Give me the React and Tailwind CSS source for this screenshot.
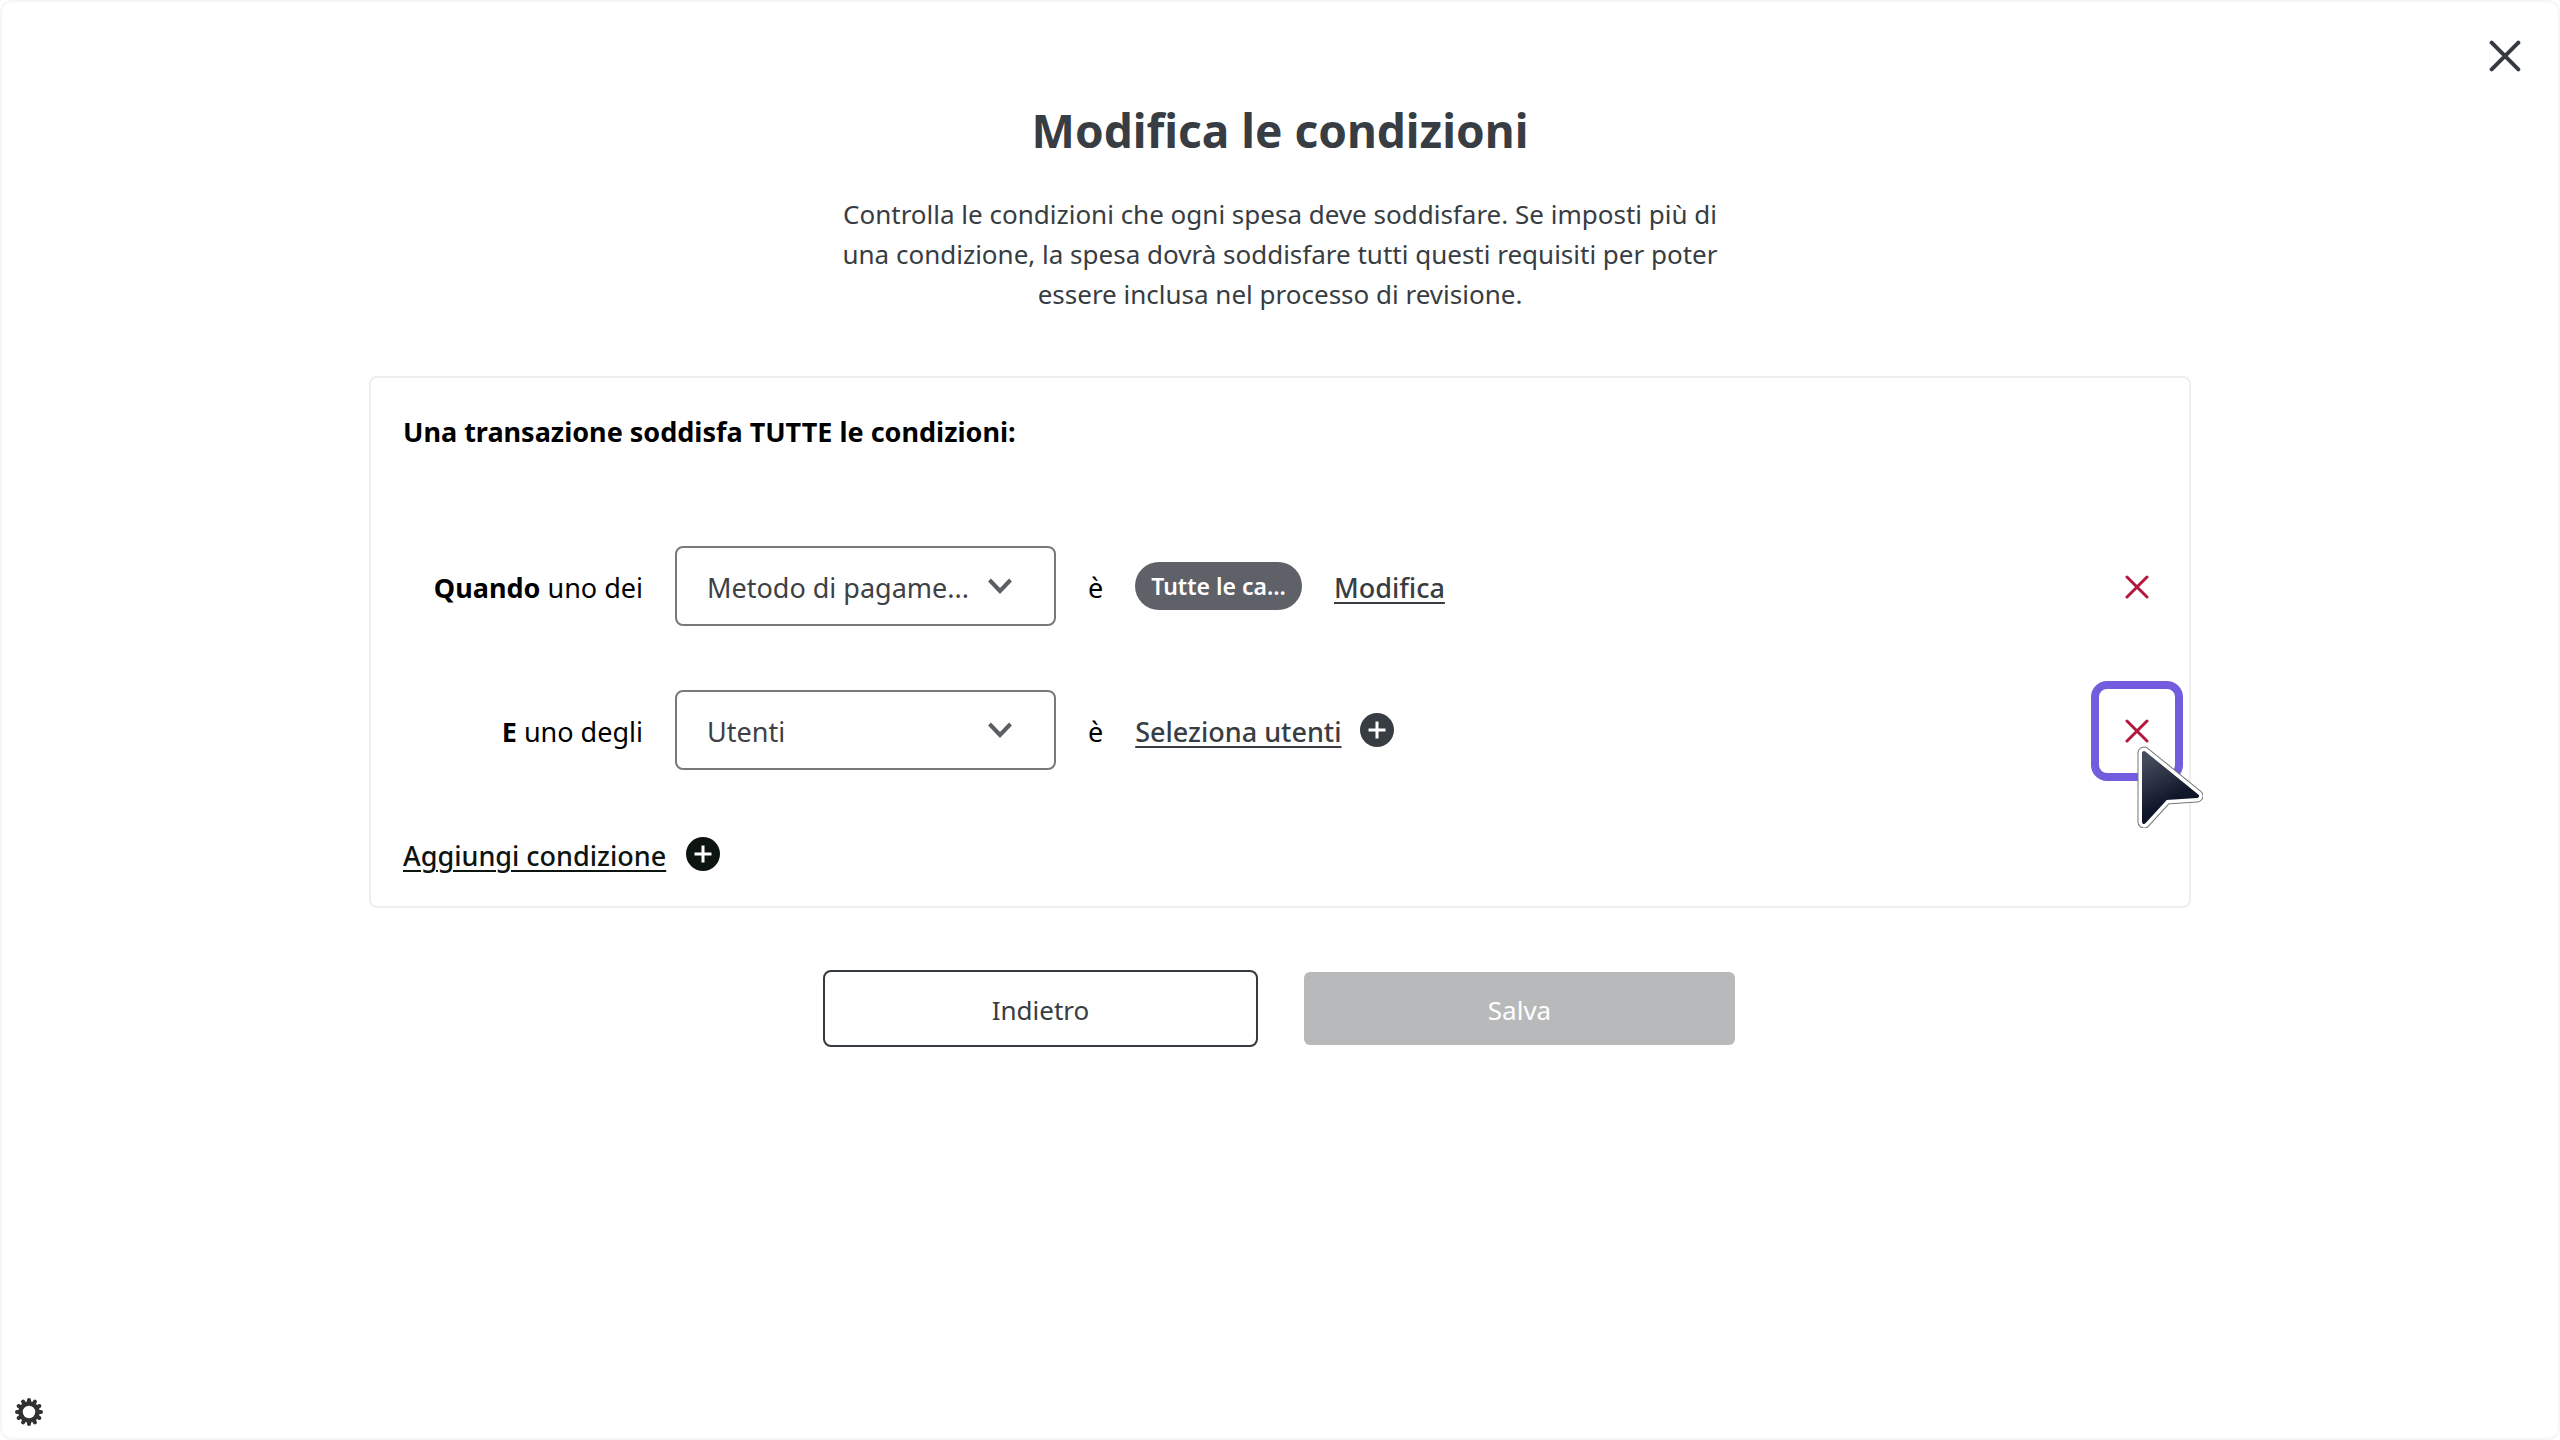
import { useState } from 'react';

const XIcon = ({ className, strokeWidth }) => (
  <svg viewBox="0 0 24 24" className={className} fill="none" stroke="currentColor" strokeWidth={strokeWidth} strokeLinecap="round" aria-hidden="true">
    <path d="M2 2 22 22M22 2 2 22" />
  </svg>
);

const PlusCircle = ({ className }) => (
  <svg viewBox="0 0 34 34" className={className} aria-hidden="true">
    <circle cx="17" cy="17" r="17" fill="currentColor" />
    <path d="M17 8.5v17M8.5 17h17" stroke="#fff" strokeWidth="3" fill="none" />
  </svg>
);

const GearIcon = () => (
  <svg viewBox="0 0 28 28" className="size-7" fill="none" stroke="currentColor" aria-hidden="true">
    <circle cx="14" cy="14" r="8.5" strokeWidth="4.5" />
    {[0, 30, 60, 90, 120, 150].map((angle) => (
      <path key={angle} d="M14 2v2.5M14 23.5V26" strokeWidth="4" strokeLinecap="round" transform={`rotate(${angle} 14 14)`} />
    ))}
  </svg>
);

const Cursor = () => (
  <svg viewBox="0 0 66 82" className="pointer-events-none absolute top-[57px] left-[38px] z-10 h-[82px] w-[66px]" aria-hidden="true">
    <defs>
      <linearGradient id="cursorFill" x1="0.3" y1="0" x2="0.7" y2="1">
        <stop offset="0" stopColor="#434b5c" />
        <stop offset="0.65" stopColor="#10172a" />
        <stop offset="1" stopColor="#0b1120" />
      </linearGradient>
    </defs>
    <g strokeLinejoin="round">
      <path d="M7 7 60 50 29 52 7 76Z" fill="#777" stroke="#777" strokeWidth="13" />
      <path d="M7 7 60 50 29 52 7 76Z" fill="#fff" stroke="#fff" strokeWidth="11" />
      <path d="M7 7 60 50 29 52 7 76Z" fill="url(#cursorFill)" stroke="url(#cursorFill)" strokeWidth="4" />
    </g>
  </svg>
);

const ConditionRow = ({ id, keyword, text, options, focused, children }) => {
  const [value, setValue] = useState(options[0]);

  return (
    <div className="flex h-20 items-center gap-8">
      <label htmlFor={id} className="w-60 shrink-0 pt-1 text-right whitespace-nowrap">
        <strong className="font-bold">{keyword}</strong> {text}
      </label>
      <div className="relative w-[381px] shrink-0">
        <select
          id={id}
          value={value}
          onChange={(e) => setValue(e.target.value)}
          className="h-20 w-full appearance-none rounded-lg border-2 border-[#77797b] bg-white pt-1 pr-20 pl-[30px] text-[#3d4145]"
        >
          {options.map((option) => (
            <option key={option}>{option}</option>
          ))}
        </select>
        <svg viewBox="0 0 24 16" className="pointer-events-none absolute top-8 right-11 h-4 w-6" fill="none" stroke="#5c5f61" strokeWidth="4" aria-hidden="true">
          <path d="M1.5 2 12 13 22.5 2" />
        </svg>
      </div>
      <span className="pt-1">è</span>
      {children}
      <button
        type="button"
        aria-label="Rimuovi condizione"
        className={`relative mt-0.5 -mr-[26px] ml-auto flex h-[100px] w-[92px] shrink-0 items-center justify-center rounded-2xl border-8 text-[#b3173c] ${
          focused ? 'border-[#735cdd]' : 'border-transparent'
        }`}
      >
        <XIcon className="size-6" strokeWidth={3} />
        {focused && <Cursor />}
      </button>
    </div>
  );
};

const App = () => {
  return (
    <div className="flex min-h-screen flex-col rounded-xl border-2 border-[#f6f6f6] bg-white font-['Noto_Sans','Open_Sans',sans-serif] text-[27px] leading-10 text-black">
      <div className="flex justify-end px-[29px] pt-[30px]">
        <button type="button" aria-label="Chiudi" className="flex size-12 items-center justify-center text-[#343a3f]">
          <XIcon className="size-8" strokeWidth={3} />
        </button>
      </div>

      <main className="mx-auto w-full max-w-[1822px]">
        <header className="mt-[18px] text-center text-[#373d42]">
          <h1 className="text-[46px] leading-[64px] font-bold">Modifica le condizioni</h1>
          <p className="mx-auto mt-8 max-w-[900px] text-[26px]">
            Controlla le condizioni che ogni spesa deve soddisfare. Se imposti più di una condizione, la spesa dovrà
            soddisfare tutti questi requisiti per poter essere inclusa nel processo di revisione.
          </p>
        </header>

        <section className="mt-[62px] rounded-lg border-2 border-[#eeeeee] px-8 pt-[34px] pb-[30px]">
          <h2 className="font-bold">Una transazione soddisfa TUTTE le condizioni:</h2>

          <div className="mt-[94px] flex flex-col gap-16">
            <ConditionRow id="metodo" keyword="Quando" text="uno dei" options={['Metodo di pagame...', 'Utenti']}>
              <span className="flex h-12 items-center rounded-full bg-[#5f6169] px-4 text-[23px] font-semibold text-white">
                Tutte le ca...
              </span>
              <a href="#modifica" className="pt-1 font-medium text-[#373d42] underline decoration-2 underline-offset-4">
                Modifica
              </a>
            </ConditionRow>
            <ConditionRow id="utenti" keyword="E" text="uno degli" options={['Utenti', 'Metodo di pagame...']} focused>
              <a href="#utenti" className="flex items-center gap-[18px] font-medium text-[#373d42]">
                <span className="pt-1 underline decoration-2 underline-offset-4">Seleziona utenti</span>
                <PlusCircle className="size-[34px]" />
              </a>
            </ConditionRow>
          </div>

          <button type="button" className="mt-[62px] flex items-center gap-5 font-medium text-[#0d1511]">
            <span className="pt-1 underline decoration-2 underline-offset-4">Aggiungi condizione</span>
            <PlusCircle className="size-[34px]" />
          </button>
        </section>

        <div className="mt-[62px] flex justify-center gap-11">
          <button type="button" className="h-[77px] w-[435px] rounded-lg border-2 border-[#343a3f] pt-0.5 text-[26px] text-[#373d42]">
            Indietro
          </button>
          <button type="button" disabled className="h-[77px] w-[435px] rounded-lg border-2 border-transparent bg-[#b7b9ba] bg-clip-padding pt-0.5 text-[26px] text-white">
            Salva
          </button>
        </div>
      </main>

      <footer className="mt-auto px-[13px] pb-3">
        <button type="button" aria-label="Impostazioni" className="flex text-[#303234]">
          <GearIcon />
        </button>
      </footer>
    </div>
  );
};

export default App;
